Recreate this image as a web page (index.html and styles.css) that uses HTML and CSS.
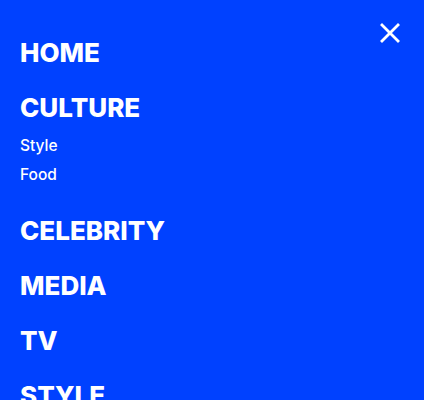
FILE: index.html
```html
<!DOCTYPE html>
<html>
<head>
<meta charset="utf-8">
<link rel="stylesheet" href="styles.css">
</head>
<body>
<nav class="menu">
  <button class="close" aria-label="Close">
    <svg width="20" height="20" viewBox="0 0 20 20"><path d="M2 2L18 18M18 2L2 18" stroke="#fff" stroke-width="2.8" stroke-linecap="square"/></svg>
  </button>
  <ul class="main">
    <li><a class="top">HOME</a></li>
    <li><a class="top">CULTURE</a>
      <ul class="sub">
        <li><a>Style</a></li>
        <li><a>Food</a></li>
      </ul>
    </li>
    <li><a class="top">CELEBRITY</a></li>
    <li><a class="top">MEDIA</a></li>
    <li><a class="top">TV</a></li>
    <li><a class="top">STYLE</a></li>
  </ul>
</nav>
</body>
</html>
```
FILE: styles.css
```css
html, body {
  margin: 0;
  padding: 0;
  height: 100%;
  background: #0041ff;
  overflow: hidden;
}
.menu {
  position: relative;
  padding: 24.5px 20px 0 20px;
  font-family: Inter, "DejaVu Sans", sans-serif;
  color: #fff;
}
.close {
  position: absolute;
  top: 23px;
  right: 24px;
  width: 20px;
  height: 20px;
  padding: 0;
  border: 0;
  background: none;
  display: flex;
}
ul {
  list-style: none;
  margin: 0;
  padding: 0;
}
.top {
  display: block;
  font-size: 26px;
  font-weight: 800;
  line-height: 55px;
}
.sub {
  margin: -4px 0 14px;
}
.sub a {
  display: block;
  font-size: 15.5px;
  font-weight: 500;
  line-height: 29px;
}
```
